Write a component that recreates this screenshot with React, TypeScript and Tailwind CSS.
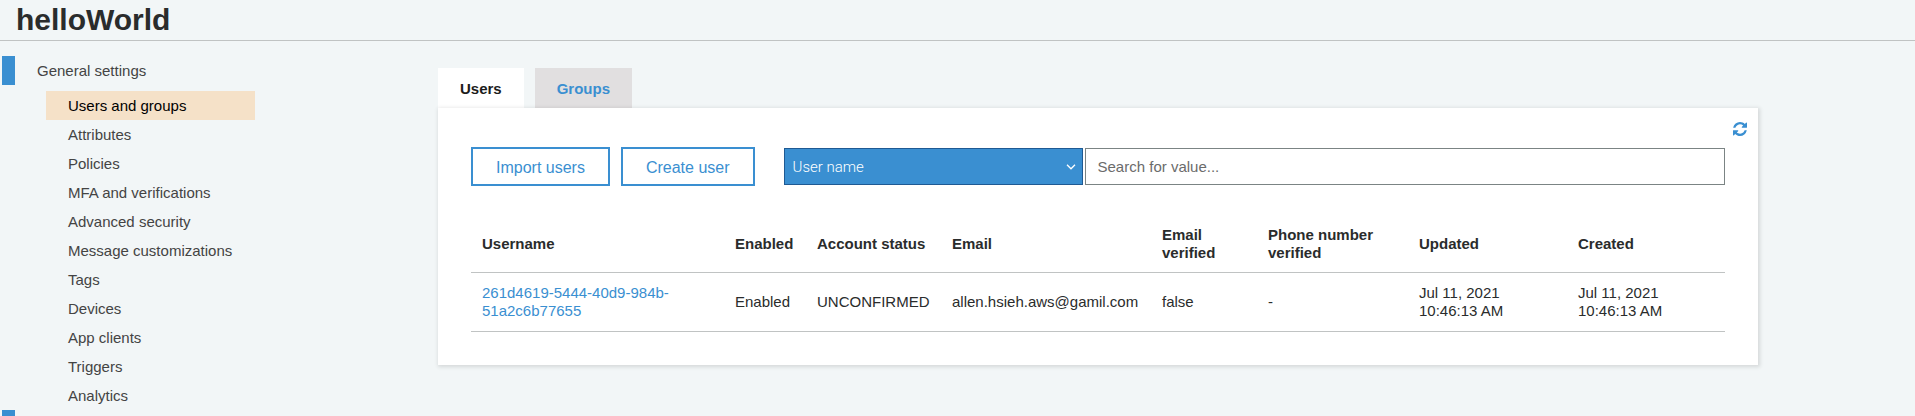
import { useState } from "react";

const settings = [
  "Users and groups",
  "Attributes",
  "Policies",
  "MFA and verifications",
  "Advanced security",
  "Message customizations",
  "Tags",
  "Devices",
  "App clients",
  "Triggers",
  "Analytics",
];

const columns = [
  { label: "Username", width: "" },
  { label: "Enabled", width: "w-[82px]" },
  { label: "Account status", width: "w-[135px]" },
  { label: "Email", width: "w-[210px]" },
  { label: "Email verified", width: "w-[106px]" },
  { label: "Phone number verified", width: "w-[151px]" },
  { label: "Updated", width: "w-[159px]" },
  { label: "Created", width: "w-[158px]" },
];

const users = [
  {
    username: "261d4619-5444-40d9-984b-51a2c6b77655",
    cells: ["Enabled", "UNCONFIRMED", "allen.hsieh.aws@gamil.com", "false", "-"],
    dates: [
      ["Jul 11, 2021", "10:46:13 AM"],
      ["Jul 11, 2021", "10:46:13 AM"],
    ],
  },
];

function RefreshIcon() {
  return (
    <svg viewBox="0 128 1536 1536" className="size-3.5" fill="currentColor" aria-hidden="true">
      <path d="M1511 1056q0 5-1 7-64 268-268 434.5t-478 166.5q-146 0-282.5-55t-243.5-157l-129 129q-19 19-45 19t-45-19-19-45v-448q0-26 19-45t45-19h448q26 0 45 19t19 45-19 45l-137 137q71 66 161 102t187 36q134 0 250-65t186-179q11-17 53-117 8-23 30-23h192q13 0 22.5 9.5t9.5 22.5zm25-800v448q0 26-19 45t-45 19h-448q-26 0-45-19t-19-45 19-45l138-138q-148-137-349-137-134 0-250 65t-186 179q-11 17-53 117-8 23-30 23h-199q-13 0-22.5-9.5t-9.5-22.5v-7q65-268 270-434.5t480-166.5q146 0 284 55.5t245 156.5l130-129q19-19 45-19t45 19 19 45z" />
    </svg>
  );
}

function Sidebar() {
  return (
    <nav className="w-[438px] shrink-0 pt-[15px] leading-[29px]" aria-label="Settings">
      <div className="flex h-[29px] pl-0.5">
        <span className="w-[13px] bg-[#3a8fd1]" />
        <a href="#general" className="pl-[22px]">General settings</a>
      </div>
      <ul className="mt-1.5 ml-[46px] w-[209px]">
        {settings.map((item, i) => (
          <li key={item}>
            <a href="#settings" className={i === 0 ? "block bg-[#f5e1c8] pl-[22px] text-black" : "block pl-[22px]"}>
              {item}
            </a>
          </li>
        ))}
      </ul>
      <div className="h-[29px] pl-0.5">
        <span className="block h-full w-[13px] bg-[#3a8fd1]" />
      </div>
    </nav>
  );
}

function Toolbar() {
  const [query, setQuery] = useState("");
  const button = "h-[39px] border-2 border-[#3a8fd1] px-[23px] pt-0.5 text-base text-[#3a8fd1] whitespace-nowrap";
  return (
    <div className="flex items-center">
      <div className="flex gap-[11px]">
        <button type="button" className={button}>Import users</button>
        <button type="button" className={button}>Create user</button>
      </div>
      <div className="ml-[29px] flex flex-1 gap-0.5">
        <div className="relative w-[299px]">
          <select
            aria-label="Search attribute"
            className="h-[37px] w-full appearance-none border border-[#1f5a93] bg-[#3a8fd1] px-2 pt-0.5 font-['Roboto',sans-serif] text-[15px] font-light text-white"
          >
            <option>User name</option>
          </select>
          <svg viewBox="0 0 10 6" className="pointer-events-none absolute top-4 right-[7px] h-1.5 w-2.5" fill="none" stroke="white" strokeWidth="1.3" aria-hidden="true">
            <path d="M1 .8 5 4.8 9 .8" />
          </svg>
        </div>
        <input
          type="text"
          aria-label="Search for value"
          placeholder="Search for value..."
          value={query}
          onChange={(e) => setQuery(e.target.value)}
          className="h-[37px] min-w-0 flex-1 border border-[#7b8484] bg-white px-3 placeholder:text-[#6b6b6b]"
        />
      </div>
    </div>
  );
}

function UsersTable() {
  return (
    <table className="mt-[30px] w-full table-fixed border-separate border-spacing-0 text-left leading-[18px] text-[#2a2c2c]">
      <thead>
        <tr className="h-[57px]">
          {columns.map((c) => (
            <th key={c.label} scope="col" className={`${c.width} border-b border-[#c0c3c3] px-[11px] font-bold`}>
              {c.label}
            </th>
          ))}
        </tr>
      </thead>
      <tbody>
        {users.map((u) => (
          <tr key={u.username} className="h-[59px]">
            <td className="border-b border-[#c0c3c3] px-[11px]">
              <a href="#user" className="text-[#3a8fd1]">{u.username}</a>
            </td>
            {u.cells.map((c, i) => (
              <td key={i} className="border-b border-[#c0c3c3] pl-[11px]">{c}</td>
            ))}
            {u.dates.map(([day, time], i) => (
              <td key={i} className="border-b border-[#c0c3c3] px-[11px]">
                {day}
                <br />
                {time}
              </td>
            ))}
          </tr>
        ))}
      </tbody>
    </table>
  );
}

export default function App() {
  return (
    <div className="h-screen overflow-hidden bg-[#f2f6f7] font-['Liberation_Sans',Arial,sans-serif] text-[15px] text-[#444]">
      <header className="border-b border-[#c0c3c3] px-4 pt-0.5 pb-0.5">
        <h1 className="text-3xl leading-9 font-bold text-[#2a2c2c]">helloWorld</h1>
      </header>
      <div className="flex">
        <Sidebar />
        <main className="mr-[157px] min-w-0 flex-1 pt-[27px]">
          <div role="tablist" className="flex gap-[11px] leading-[38px] font-bold">
            <button type="button" role="tab" aria-selected="true" className="bg-white px-[22px] pt-0.5 text-[#1c1c1c]">Users</button>
            <button type="button" role="tab" aria-selected="false" className="bg-[#e1dfe0] px-[22px] pt-0.5 text-[#3a8fd1]">Groups</button>
          </div>
          <section className="relative bg-white px-[33px] pt-[39px] pb-[33px] shadow-[1px_1px_4px_1px_rgba(0,0,0,0.12)]">
            <button type="button" aria-label="Refresh" className="absolute top-3.5 right-[11px] text-[#3a8fd1]">
              <RefreshIcon />
            </button>
            <Toolbar />
            <UsersTable />
          </section>
        </main>
      </div>
    </div>
  );
}
